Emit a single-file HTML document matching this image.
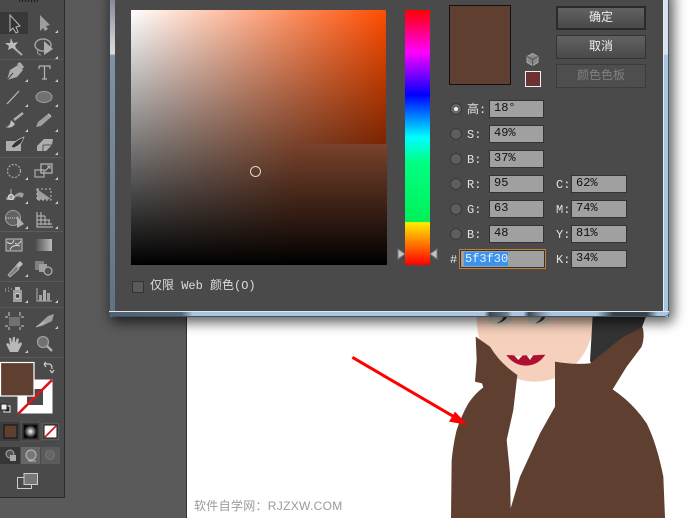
<!DOCTYPE html>
<html><head><meta charset="utf-8">
<style>
html,body{margin:0;padding:0}
body{width:695px;height:518px;overflow:hidden;position:relative;background:#5a5a5a;font-family:"Liberation Mono","Noto Sans CJK SC",monospace;font-size:12px}
div,span{position:absolute;box-sizing:border-box}
.t{white-space:nowrap;color:#e2e2e2;line-height:14px}
.f{background:#a0a0a0;border:1px solid #333;color:#111;height:18px;line-height:15px;padding-left:4px;white-space:nowrap}
.r{width:12px;height:12px;border-radius:50%;background:#5e5e5e;border:1px solid #3a3a3a;left:450px}
.b{left:556px;width:90px;height:24px;background:linear-gradient(#626262,#494949);border:1px solid #333;color:#eee;text-align:center;line-height:22px}
</style></head><body>
<div style="left:187px;top:0;width:508px;height:518px;background:#fff"></div>
<div style="left:186px;top:0;width:1px;height:518px;background:#333"></div>
<svg style="position:absolute;left:340px;top:300px" width="355" height="218" viewBox="0 0 1065 654">
<ellipse cx="585" cy="60" rx="175" ry="185" fill="#f5d0bc"/>
<path d="M759 30L925 30L905 85L885 140L760 205L750 182L752 150Z" fill="#333"/>
<ellipse cx="480" cy="60" rx="36" ry="16" fill="#d5cfc0"/><ellipse cx="595" cy="60" rx="34" ry="16" fill="#d5cfc0"/>
<path d="M470 70Q490 62 495 38L505 38Q502 66 470 70ZM585 70Q605 62 610 38L620 38Q616 66 585 70Z" fill="#3a3a3a"/>
<path d="M499 165Q560 168 616 164Q595 197 555 197Q520 195 499 165Z" fill="#b01030"/>
<path d="M522 166L548 166L535 180ZM560 166L580 165L570 180Z" fill="#f4efe6"/>
<path d="M407 110L450 140Q480 190 532 225L520 330L500 420L510 520L512 625L540 530L600 400L645 320L645 185Q700 195 750 190L850 110L908 82Q915 110 905 140L860 200L818 268Q880 310 920 370Q950 430 970 530L975 654L333 654L335 480Q340 430 350 390Q365 345 385 310Q405 280 430 262L426 250L405 245L410 180Z" fill="#5f3f30"/>
<path d="M37 172L345 352" stroke="#f00" stroke-width="9" fill="none"/>
<path d="M383 375L345 335L327 365Z" fill="#f00"/>
</svg>
<div class="t" style="left:194px;top:499px;font-family:'Liberation Sans','Noto Sans CJK SC',sans-serif;color:#9a9a9a;letter-spacing:.3px">软件自学网：RJZXW.COM</div>

<!-- Toolbar -->
<div style="left:0;top:0;width:65px;height:498px;background:#4a4a4a;border-right:1px solid #2c2c2c;border-bottom:1px solid #2c2c2c"></div>
<svg style="position:absolute;left:0;top:0" width="65" height="498" viewBox="0 0 65 498">
<rect x="19" y="0" width="19" height="2" fill="#222"/>
<path d="M21 0v2M24 0v2M27 0v2M30 0v2M33 0v2M36 0v2" stroke="#666" stroke-width="1"/>
<rect x="0" y="12" width="28" height="22" fill="#383838"/>
<g stroke="#5a5a5a" stroke-width="1"><path d="M0 59.500H63M0 157.500H63M0 231.500H63M0 281.500H63M0 307.500H63M0 357.500H63"/></g>
<g fill="#ccc"><path d="M58 30v3h-3zM58 56v3h-3zM28 79v3h-3zM58 79v3h-3zM28 104v3h-3zM58 104v3h-3zM28 129v3h-3zM58 129v3h-3zM58 152v3h-3zM28 177v3h-3zM58 177v3h-3zM28 201v3h-3zM58 201v3h-3zM28 226v3h-3zM58 226v3h-3zM28 274v3h-3zM28 300v3h-3zM58 300v3h-3zM58 326v3h-3zM28 350v3h-3z"/></g>
<g opacity=".88">
<path d="M10 15L10 31L13 28L16 33L18 32L16 27L20 26Z" fill="#333" stroke="#ccc" stroke-width="1"/>
<path d="M40 15L40 31L43 28L45 31L48 29L46 26L50 25Z" fill="#aaa"/>
<path d="M13 47L22 55" stroke="#bbb" stroke-width="2"/><path d="M11 38L13 43L18 42L15 46L17 50L12 48L8 50L9 46L5 43L10 43Z" fill="#ccc"/>
<ellipse cx="43" cy="45" rx="8" ry="6" fill="none" stroke="#aaa" stroke-width="1.500"/><path d="M44 41L53 49L44 55Z" fill="#bbb"/><path d="M38 50q-2 4 3 5" fill="none" stroke="#aaa"/>
<path d="M7 80L10 70L18 65L23 70L17 77Z" fill="#bbb"/><path d="M17 64L20 62L24 67L22 69Z" fill="#bbb"/><path d="M7 80L13 73" stroke="#444"/>
<path d="M39 66H50V69M44.500 66V79M42 79H47M39 66V69" stroke="#c4c4c4" stroke-width="1.200" fill="none"/>
<path d="M7 104L19 91" stroke="#ccc" stroke-width="1.200"/>
<ellipse cx="44" cy="97" rx="8" ry="5.500" fill="#777" stroke="#aaa"/>
<path d="M14 120L23 113" stroke="#bbb" stroke-width="2.500"/><path d="M5 127Q10 127 11 120L15 124Q12 129 5 127Z" fill="#ccc"/>
<path d="M36 127L38 122L48 114L51 117L41 126Z" fill="#aaa"/><path d="M48 114L50 115L51 117" stroke="#ddd" fill="none"/>
<rect x="6" y="141" width="15" height="10" fill="#bbb"/><path d="M11 147Q14 141 24 137L22 142Q18 147 13 148Z" fill="#333" stroke="#ccc" stroke-width=".7"/>
<path d="M37 146L44 139H53L52 145L46 151H37Z" fill="#bbb"/><path d="M43 145H52M43 145L43 151" stroke="#555"/>
<circle cx="14" cy="171" r="6.500" fill="none" stroke="#bbb" stroke-width="1.200" stroke-dasharray="2 1.500"/>
<rect x="35" y="170" width="9" height="7" fill="none" stroke="#bbb" stroke-width="1.200"/><rect x="41" y="164" width="11" height="9" fill="none" stroke="#ccc" stroke-width="1.200"/><path d="M45 171L50 166M47 166H50V169" stroke="#ccc" fill="none"/>
<path d="M6 200Q10 192 14 196Q20 190 24 194L22 198Q16 194 14 200" fill="#aaa"/><circle cx="11" cy="197" r="2.500" fill="none" stroke="#eee" stroke-width="1.200"/><path d="M11 189V194M6 198H8" stroke="#bbb"/>
<path d="M37 189L51 199L37 200Z" fill="#aaa"/><rect x="37" y="189" width="14" height="11" fill="none" stroke="#ccc" stroke-dasharray="2 2"/>
<circle cx="13" cy="218" r="7.500" fill="#666" stroke="#aaa"/><path d="M6 218H18" stroke="#eee" stroke-dasharray="1 1"/><path d="M17 216L24 224L17 228Z" fill="#bbb"/>
<path d="M37 212V227H53M41 212V225M45 216V225M49 220V225M37 216H45M37 220H50M37 224H52" stroke="#bbb" stroke-width="1.200" fill="none"/>
<rect x="6" y="239" width="16" height="12" fill="#666" stroke="#ccc"/><path d="M7 242Q12 246 14 240M10 250Q12 244 20 246M15 243Q18 246 21 241" stroke="#eee" fill="none"/>
<defs><linearGradient id="g" x1="0" x2="1"><stop offset="0" stop-color="#555"/><stop offset="1" stop-color="#ccc"/></linearGradient></defs>
<rect x="36" y="239" width="16" height="12" fill="url(#g)"/>
<path d="M8 275L16 266L19 269L10 277Z" fill="#888" stroke="#ccc" stroke-width=".8"/><path d="M16 265L20 261L23 264L19 268Z" fill="#ccc"/>
<rect x="35" y="261" width="9" height="9" fill="#888"/><rect x="39" y="264" width="8" height="8" fill="#aaa"/><circle cx="48" cy="271" r="4" fill="#555" stroke="#bbb" stroke-width="1.200"/>
<path d="M5 289h1M8 288h1M5 291h1M8 291h1M11 289h1" stroke="#ccc"/><rect x="13" y="290" width="9" height="12" fill="#aaa"/><rect x="15" y="287" width="5" height="3" fill="#ccc"/><circle cx="17.500" cy="296" r="2.500" fill="#444" stroke="#eee"/>
<path d="M37 288V301H52" stroke="#bbb" fill="none"/><rect x="39" y="295" width="3" height="6" fill="#aaa"/><rect x="43" y="290" width="3" height="11" fill="#bbb"/><rect x="47" y="293" width="3" height="8" fill="#aaa"/>
<rect x="9" y="317" width="11" height="9" fill="#777"/><path d="M5 317H8M21 317H24M5 326H8M21 326H24M9 312V316M20 312V316M9 327V330M20 327V330" stroke="#ddd"/>
<path d="M36 327L48 316L54 314L52 321L42 326Z" fill="#aaa"/><path d="M36 327L45 322" stroke="#ddd"/>
<path d="M10 352L6 344L8 343L10 345L9 338L11 338L12 343L13 337L15 337L15 343L17 338L19 339L18 344L21 342L22 344L18 352Z" fill="#c8c8c8"/>
<circle cx="43" cy="342" r="5.500" fill="#777" stroke="#aaa" stroke-width="1.300"/><path d="M47 346L52 351" stroke="#bbb" stroke-width="2.500"/>
</g>
<rect x="17.500" y="379.500" width="35" height="34" fill="#fff"/><rect x="27" y="389" width="16" height="16" fill="#4a4a4a"/>
<path d="M18 414L52 380" stroke="#d8181f" stroke-width="2.600"/>
<rect x="0.500" y="362.500" width="33.500" height="33.500" fill="#5f3f30" stroke="#fff" stroke-width="1.200"/>
<path d="M44 364L46 362M44 364L46 367M44 364H49Q52 364 52 369M52 373L50 370M52 373L54 370" stroke="#ccc" stroke-width="1.200" fill="none"/>
<rect x="4" y="406" width="6" height="6" fill="#222" stroke="#eee"/><rect x="1" y="404" width="6" height="6" fill="#eee" stroke="#222"/>
<rect x="0" y="422" width="21" height="19" fill="#3c3c3c"/><rect x="21" y="422" width="19" height="19" fill="#3a3a3a" stroke="#5a5a5a"/><rect x="41" y="422" width="19" height="19" fill="#5a5a5a" stroke="#444"/>
<rect x="4" y="425" width="13" height="13" fill="#5f3f30" stroke="#111"/>
<defs><radialGradient id="rg"><stop offset="0" stop-color="#fff"/><stop offset="1" stop-color="#000"/></radialGradient></defs>
<rect x="24" y="425" width="13" height="13" fill="url(#rg)" stroke="#111"/>
<rect x="44" y="425" width="13" height="13" fill="#fff" stroke="#111"/><path d="M45 437L56 426" stroke="#d8181f" stroke-width="1.800"/>
<rect x="0" y="447" width="20" height="17" fill="#363636"/><rect x="21" y="447" width="19" height="17" fill="#666"/><rect x="41" y="447" width="19" height="17" fill="#5b5b5b"/>
<circle cx="10" cy="454" r="4" fill="#555" stroke="#aaa"/><rect x="10" y="455" width="6" height="6" fill="#aaa"/>
<circle cx="31" cy="455" r="5" fill="#777" stroke="#bbb"/><path d="M28 461H36" stroke="#bbb"/>
<circle cx="50" cy="455" r="4.500" fill="#666" stroke="#777"/>
<rect x="17.500" y="477.500" width="14" height="11" fill="none" stroke="#ccc"/><rect x="24" y="473.500" width="13.500" height="11" fill="#777" stroke="#ccc"/>
</svg>

<!-- Dialog -->
<div style="left:109px;top:-10px;width:560px;height:327px;border-radius:0 0 5px 5px;box-shadow:3px 4px 12px 2px rgba(0,0,0,.6);background:#a8c6e2"></div>
<div style="left:109px;top:0;width:6px;height:317px;background:linear-gradient(#889 0,#d0d2d4 14%,#d8dadc 17%,#7f93a6 17.500%,#5f7283 100%);border-left:1px solid #3c4a55"></div>
<div style="left:663px;top:0;width:6px;height:317px;background:linear-gradient(#d7e3ee 0,#d7e3ee 17%,#a8c6e2 17.500%,#a8c6e2 100%);border-right:1px solid #4a5a66;border-left:1px solid #e5eef5"></div>
<div style="left:109px;top:311px;width:560px;height:6px;border-radius:0 0 5px 5px;border-bottom:1px solid #44525e;border-top:1px solid #dde8f1;background:linear-gradient(90deg,#4f6172 0,#55687a 13%,#a8c6e2 15%,#a8c6e2 67%,#3d4650 68%,#66788a 71%,#a8c6e2 72%,#a8c6e2 74%,#3d4650 75%,#7d90a2 77%,#a8c6e2 79%,#a8c6e2 87%,#38414a 90%,#38414a 96%,#a8c6e2 98%)"></div>
<div style="left:115px;top:0;width:548px;height:311px;background:#4a4a4a"></div>

<!-- colour square -->
<div style="left:131px;top:10px;width:256px;height:255px;background:linear-gradient(180deg,rgba(0,0,0,0),#000),linear-gradient(90deg,#fff,#ff4c00)"></div>
<div style="left:131px;top:144px;width:256px;height:121px;background:linear-gradient(180deg,rgba(0,0,0,0),#000) 0 -134px/256px 255px no-repeat,linear-gradient(90deg,#fff 0,#ff8b59 65%,#ff8b59 100%)"></div>
<div style="left:386px;top:10px;width:1px;height:134px;background:#4a4a4a"></div>
<div style="left:250px;top:166px;width:11px;height:11px;border-radius:50%;border:1px solid #e8d8cc"></div>

<!-- spectrum -->
<div style="left:405px;top:10px;width:25px;height:255px;background:linear-gradient(180deg,#f00 0,#f0f 16.600%,#00f 33.300%,#0ff 50%,#00ff80 60%,#00f05a 83%,#ffee00 83.300%,#f00 100%)"></div>
<svg style="position:absolute;left:397px;top:248px" width="42" height="12"><path d="M1 1L8 6L1 11Z" fill="#c4c4c4" stroke="#777"/><path d="M40 1L33 6L40 11Z" fill="#c4c4c4" stroke="#777"/></svg>

<!-- preview -->
<div style="left:449px;top:5px;width:62px;height:80px;background:#5f3f30;border:1px solid #111"></div>
<svg style="position:absolute;left:526px;top:53px" width="13" height="13"><path d="M6.500 .5L12 3.500V9.500L6.500 12.500L1 9.500V3.500Z" fill="#888" stroke="#aaa"/><path d="M1 3.500L6.500 6.500L12 3.500M6.500 6.500V12.500" stroke="#555" fill="none"/></svg>
<div style="left:525px;top:71px;width:16px;height:16px;background:#6e3030;border:1px solid #f0f0f0"></div>

<!-- buttons -->
<div class="b" style="top:6px;border:2px solid #2a2a2a;line-height:20px">确定</div>
<div class="b" style="top:35px">取消</div>
<div class="b" style="top:64px;background:#4e4e4e;color:#808080;border-color:#3c3c3c">颜色色板</div>

<!-- radios -->
<div class="r" style="top:103px;background:#666"></div><div style="left:454px;top:107px;width:4px;height:4px;border-radius:50%;background:#eee"></div>
<div class="r" style="top:128px"></div>
<div class="r" style="top:153px"></div>
<div class="r" style="top:178px"></div>
<div class="r" style="top:203px"></div>
<div class="r" style="top:228px"></div>

<!-- labels -->
<div class="t" style="left:467px;top:103px">高:</div>
<div class="t" style="left:467px;top:128px">S:</div>
<div class="t" style="left:467px;top:153px">B:</div>
<div class="t" style="left:467px;top:178px">R:</div>
<div class="t" style="left:467px;top:203px">G:</div>
<div class="t" style="left:467px;top:228px">B:</div>
<div class="t" style="left:450px;top:253px">#</div>
<div class="t" style="left:556px;top:178px">C:</div>
<div class="t" style="left:556px;top:203px">M:</div>
<div class="t" style="left:556px;top:228px">Y:</div>
<div class="t" style="left:556px;top:253px">K:</div>

<!-- fields -->
<div class="f" style="left:489px;top:100px;width:55px">18°</div>
<div class="f" style="left:489px;top:125px;width:55px">49%</div>
<div class="f" style="left:489px;top:150px;width:55px">37%</div>
<div class="f" style="left:489px;top:175px;width:55px">95</div>
<div class="f" style="left:489px;top:200px;width:55px">63</div>
<div class="f" style="left:489px;top:225px;width:55px">48</div>
<div class="f" style="left:571px;top:175px;width:56px">62%</div>
<div class="f" style="left:571px;top:200px;width:56px">74%</div>
<div class="f" style="left:571px;top:225px;width:56px">81%</div>
<div class="f" style="left:571px;top:250px;width:56px">34%</div>
<div style="left:459px;top:249px;width:87px;height:20px;border:1px solid #c08038;background:#a0a0a0;box-shadow:inset 0 0 0 1px #333"></div>
<div style="left:464px;top:252px;width:44px;height:14px;background:#3f92ec;color:#e8f2ff;line-height:14px;padding-left:1px">5f3f30</div>

<!-- web only -->
<div style="left:132px;top:281px;width:12px;height:12px;background:#5a5a5a;border:1px solid #333"></div>
<div class="t" style="left:150px;top:279px;color:#ddd;white-space:pre">仅限 Web 颜色(O)</div>
</body></html>
